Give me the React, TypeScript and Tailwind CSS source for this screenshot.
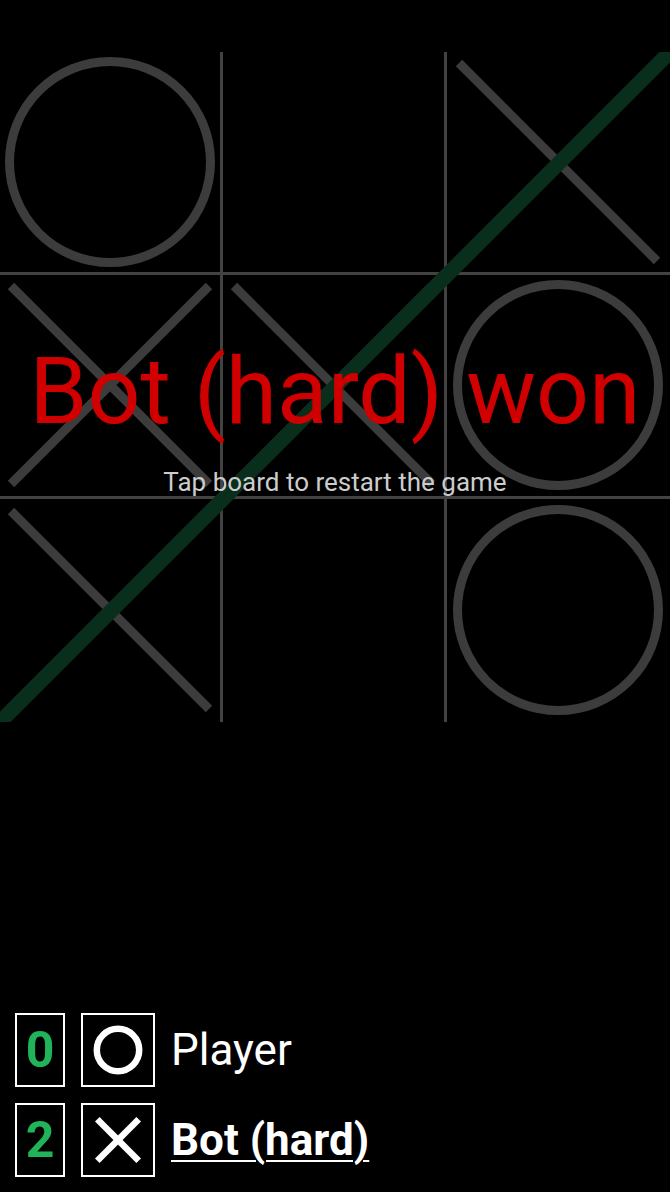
import React from "react";

type Piece = "X" | "O" | "";

const board: Piece[][] = [
  ["O", "", "X"],
  ["X", "X", "O"],
  ["X", "", "O"],
];

const PIECE = "#3c3c3c";

function BoardPiece({ p }: { p: Piece }) {
  if (p === "O") {
    return (
      <svg width="220" height="220" viewBox="0 0 220 220" className="shrink-0">
        <circle cx="110" cy="110" r="100.5" fill="none" stroke={PIECE} strokeWidth="9" />
      </svg>
    );
  }
  if (p === "X") {
    return (
      <svg width="220" height="220" viewBox="0 0 220 220" className="shrink-0">
        <line x1="11" y1="11" x2="209" y2="209" stroke={PIECE} strokeWidth="9" strokeLinecap="butt" />
        <line x1="209" y1="11" x2="11" y2="209" stroke={PIECE} strokeWidth="9" strokeLinecap="butt" />
      </svg>
    );
  }
  return null;
}

function ScoreRow({
  score,
  mark,
  name,
  active,
}: {
  score: number;
  mark: "X" | "O";
  name: string;
  active?: boolean;
}) {
  return (
    <div className="flex items-center h-[74px]">
      <div className="w-[50px] h-[74px] border-2 border-white flex items-center justify-center">
        <span className="text-[50px] leading-[50px] font-bold text-[#21b35a]">{score}</span>
      </div>
      <div className="ml-4 w-[74px] h-[74px] border-2 border-white flex items-center justify-center">
        {mark === "O" ? (
          <svg width="50" height="50" viewBox="0 0 50 50">
            <circle cx="25" cy="25" r="21.2" fill="none" stroke="#ffffff" strokeWidth="6.5" />
          </svg>
        ) : (
          <svg width="50" height="50" viewBox="0 0 50 50">
            <line x1="4.3" y1="4.3" x2="45.7" y2="45.7" stroke="#ffffff" strokeWidth="6.5" />
            <line x1="45.7" y1="4.3" x2="4.3" y2="45.7" stroke="#ffffff" strokeWidth="6.5" />
          </svg>
        )}
      </div>
      <span
        className={
          active
            ? "ml-4 text-[44px] leading-[44px] text-white font-bold underline decoration-2 underline-offset-[5px] whitespace-nowrap"
            : "ml-4 text-[44px] leading-[44px] text-white whitespace-nowrap"
        }
      >
        {name}
      </span>
    </div>
  );
}

export default function App() {
  return (
    <div className="w-full h-[1192px] bg-black flex flex-col font-['Roboto',sans-serif] overflow-hidden">
      <div className="relative w-full h-[670px] mt-[52px] shrink-0">
        <div className="grid grid-cols-3 grid-rows-3 w-full h-full">
          {board.map((row, r) =>
            row.map((p, c) => (
              <div
                key={`${r}-${c}`}
                className={
                  "flex items-center justify-center border-[#424242] " +
                  (c < 2 ? "border-r-[3px] " : "") +
                  (r < 2 ? "border-b-[3px]" : "")
                }
              >
                <BoardPiece p={p} />
              </div>
            ))
          )}
        </div>
        <svg
          className="absolute inset-0 w-full h-full overflow-hidden"
          viewBox="0 0 670 670"
          preserveAspectRatio="none"
        >
          <line x1="-20" y1="690" x2="690" y2="-20" stroke="#0a2e1c" strokeWidth="15" />
        </svg>
        <div className="absolute inset-0 flex flex-col items-center pt-[293px]">
          <div className="text-[93px] leading-[93px] text-[#d00000] whitespace-nowrap">Bot (hard) won</div>
          <div className="mt-[31px] text-[26px] leading-[26px] text-[#cccccc] whitespace-nowrap">
            Tap board to restart the game
          </div>
        </div>
      </div>
      <div className="flex-1" />
      <div className="flex flex-col gap-4 px-[15px] pb-[15px]">
        <ScoreRow score={0} mark="O" name="Player" />
        <ScoreRow score={2} mark="X" name="Bot (hard)" active />
      </div>
    </div>
  );
}
